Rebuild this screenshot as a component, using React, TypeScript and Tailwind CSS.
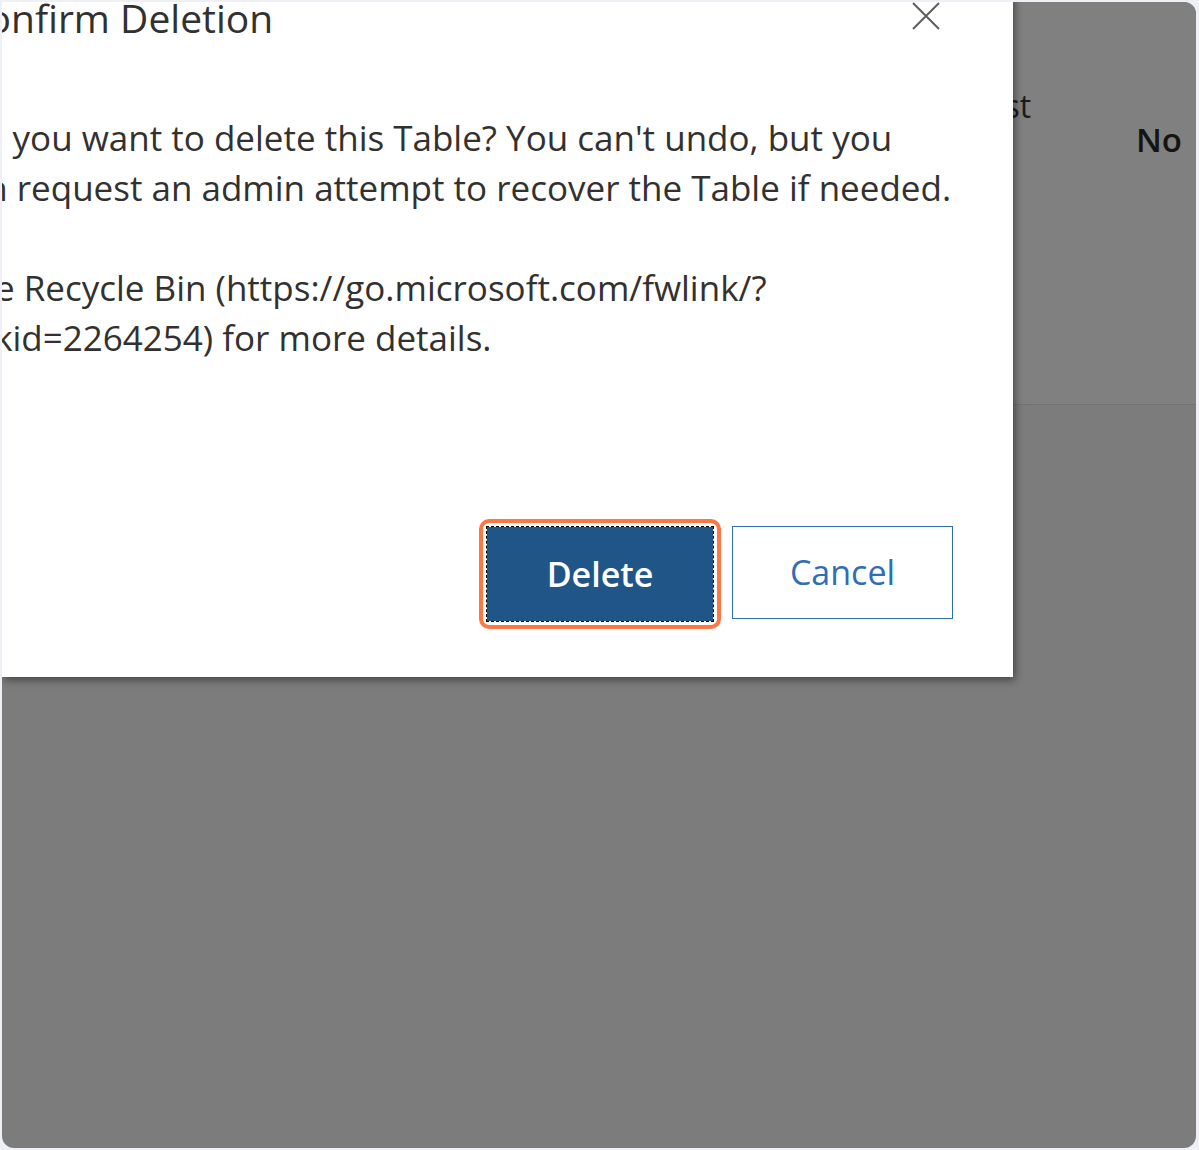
import React from "react";

export default function App() {
  const font = { fontFamily: '"Open Sans", "Noto Sans", sans-serif' };
  return (
    <div className="w-[1199px] h-[1150px] bg-[#eef0f5] pt-[2px] pl-[2px] pr-[3px] pb-[2px]" style={font}>
      <div className="relative w-full h-full overflow-hidden rounded-tr-[12px] rounded-b-[12px] bg-[#7c7c7c]">
        {/* underlying page (dimmed) */}
        <div className="flex flex-col h-full">
          <div className="h-[403px] bg-[#808080] border-b border-[#727272] flex">
            <div className="w-[1000px] shrink-0" />
            <div className="flex-1 relative">
              <div className="text-[30px] leading-[40px] text-[#1b1b1b] mt-[-34px] ml-[130px]">3.1</div>
              <div className="text-[32px] leading-[40px] text-[#1b1b1b] mt-[78px] ml-[-37px]">Cost</div>
              <div className="text-[33px] leading-[40px] font-semibold text-[#141414] mt-[-6px] ml-[134px]">No</div>
            </div>
          </div>
          <div className="flex-1" />
        </div>

        {/* dialog */}
        <div className="absolute left-0 top-[-20px] w-[1011px] h-[695px] bg-white shadow-[2px_3px_8px_rgba(0,0,0,0.45)] overflow-hidden flex flex-col text-[#323130]">
          <div className="flex items-start h-[72px]">
            <div className="text-[39px] leading-[39px] whitespace-nowrap mt-[16px] ml-[-39px]">Confirm Deletion</div>
            <div className="flex-1" />
            <svg width="30" height="30" viewBox="0 0 30 30" className="mt-[19px] mr-[72px]">
              <path d="M2 2 L28 28 M28 2 L2 28" stroke="#605e5c" strokeWidth="2" fill="none" />
            </svg>
          </div>
          <div className="text-[35px] leading-[50px] whitespace-nowrap mt-[59px]">
            <div className="ml-[-45px]">Do you want to delete this Table? You can't undo, but you</div>
            <div className="ml-[-52px]">can request an admin attempt to recover the Table if needed.</div>
            <div className="h-[50px]" />
            <div className="ml-[-41px]">the Recycle Bin (https://go.microsoft.com/fwlink/?</div>
            <div className="ml-[-47px]">linkid=2264254) for more details.</div>
          </div>
          <div className="flex justify-end items-start pr-[60px] mt-[156px]">
            <div className="border-4 border-[#ff7743] rounded-[10px] p-[3px] bg-white">
              <button className="w-[228px] h-[96px] bg-[#1f5687] text-white text-[34px] font-semibold border border-white outline outline-1 outline-dashed outline-black -outline-offset-1">
                Delete
              </button>
            </div>
            <button className="ml-[11px] mt-[7px] w-[221px] h-[93px] bg-white border border-[#2f6db5] text-[#2f6db5] text-[34px]">
              Cancel
            </button>
          </div>
        </div>
      </div>
    </div>
  );
}
